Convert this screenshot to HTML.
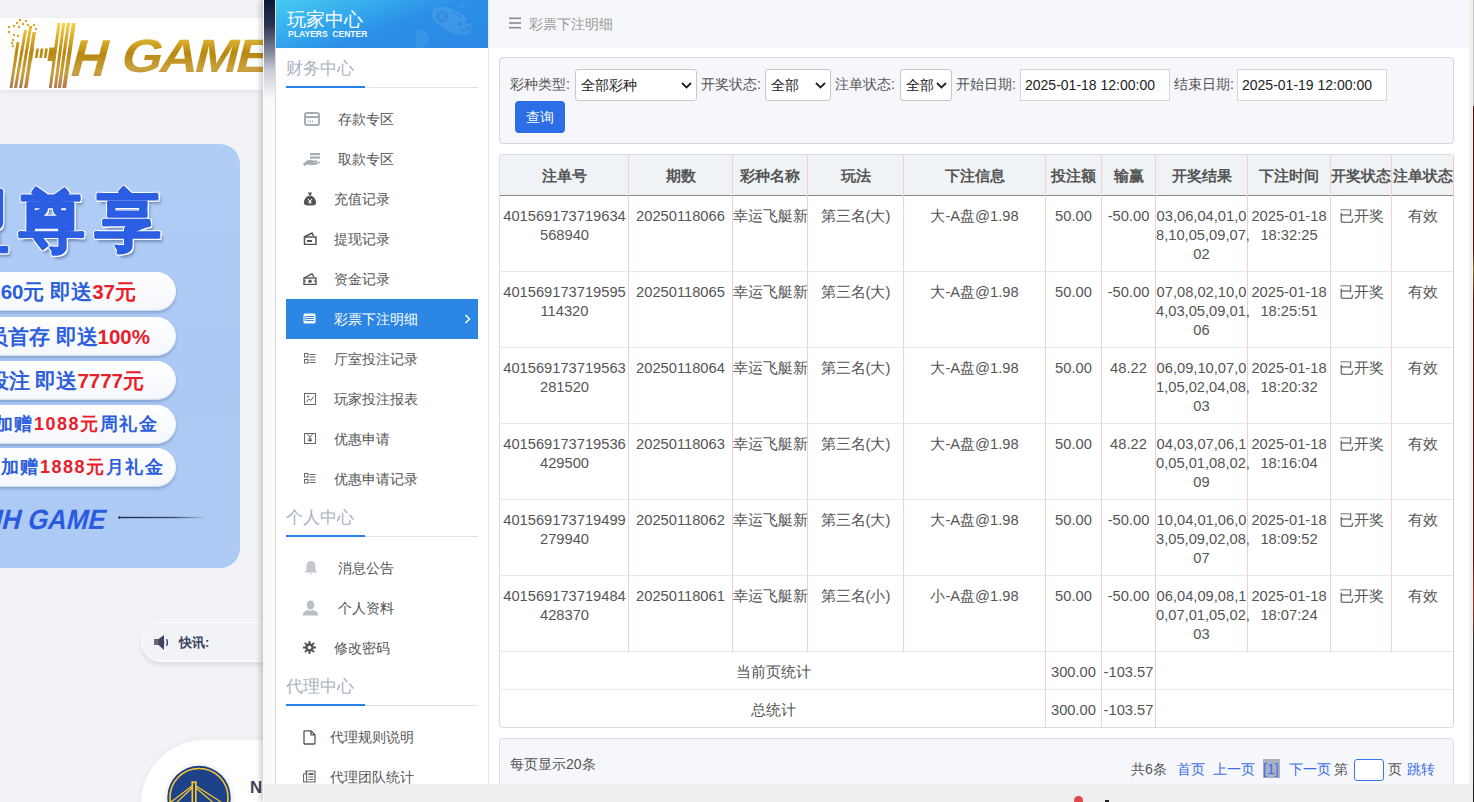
<!DOCTYPE html>
<html><head><meta charset="utf-8">
<style>
*{box-sizing:border-box;margin:0;padding:0}
html,body{width:1474px;height:802px;overflow:hidden}
body{position:relative;background:#f2f3f7;font-family:"Liberation Sans",sans-serif;color:#555}
.abs{position:absolute}
/* ---------- background page ---------- */
#logobar{left:0;top:18px;width:263px;height:72px;background:#fff;box-shadow:0 2px 6px rgba(0,0,0,.06)}
#banner{left:-30px;top:144px;width:270px;height:424px;border-radius:0 20px 20px 0;background:linear-gradient(180deg,#b0cdf6 0%,#abc9f4 50%,#aecbf5 100%)}
.pill{position:absolute;left:-60px;width:236px;height:39px;border-radius:20px;background:linear-gradient(180deg,#fff 0%,#f4f7fc 100%);box-shadow:0 2px 3px rgba(60,90,150,.35),inset 0 -1px 1px rgba(160,180,210,.4);font-weight:bold;font-size:20.5px;color:#2d5fdc;line-height:39px;white-space:nowrap;text-align:right;padding-right:40px}
.pill b{color:#e8202a}
#news{left:141px;top:622px;width:260px;height:40px;border-radius:20px;border:1px solid #fff;background:#f2f3f7;box-shadow:0 3px 5px rgba(0,0,0,.10)}
#card{left:141px;top:740px;width:300px;height:200px;border-radius:64px;background:#fff;box-shadow:0 0 8px rgba(0,0,0,.05)}
/* ---------- modal ---------- */
#modal{left:263px;top:0;width:1211px;height:802px;background:#fafafa;box-shadow:-3px 0 5px rgba(0,0,0,.18)}
#mstrip{left:1px;top:0;width:12px;height:100px;background:linear-gradient(180deg,#0d1a33 0%,#2a3550 25%,#7a8194 50%,#c9ccd6 70%,#fafafa 100%)}
#side{left:12px;top:0;width:214px;height:802px;background:#fff;border-left:1px solid #dcdcdc;border-right:1px solid #e4e7ed}
#content{left:226px;top:0;width:980px;height:802px;background:#fff}
#rstrip{left:1206px;top:0;width:5px;height:802px;background:#f2f2f2}
#bottombar{left:1px;top:784px;width:1210px;height:18px;background:#efefef}

/* sidebar */
#shead{left:0;top:0;width:212px;height:48px;background:linear-gradient(160deg,#45cbf2 0%,#33a6ec 35%,#2b8fe6 55%,#2a88e5 100%);overflow:hidden}
#shead .t1{position:absolute;left:11px;top:9px;font-size:19px;color:#fff;line-height:22px;white-space:nowrap}
#shead .t2{position:absolute;left:12px;top:29px;font-size:8.6px;font-weight:bold;color:#fff;line-height:10px;letter-spacing:0;white-space:nowrap;word-spacing:2px;opacity:.95}
.sec{position:absolute;left:10px;width:192px;height:30px}
.sec .tt{position:absolute;left:0;top:-4px;font-size:17px;color:#a9b2bf;line-height:30px;white-space:nowrap}
.sec .ln{position:absolute;left:0;bottom:0;width:192px;height:1px;background:#dfe3e8}
.sec .bl{position:absolute;left:0;bottom:0;width:79px;height:2px;background:#2680eb}
.mi{position:absolute;left:10px;width:192px;height:40px;font-size:14px;color:#555;line-height:40px;white-space:nowrap}
.mi .tx{position:absolute;top:0}
.mi svg{position:absolute}
.mi.act{background:#2b86e4;color:#fff}

/* content */
#chead{left:0;top:0;width:979px;height:48px;background:#f5f7fa}
#chead .tt{position:absolute;left:40px;top:0;line-height:48px;font-size:14px;color:#999;white-space:nowrap}
#filter{left:10px;top:57px;width:955px;height:87px;border:1px solid #d3d7de;border-radius:4px;background:#f5f7fa}
.lb{position:absolute;font-size:14px;color:#555;line-height:20px;white-space:nowrap;top:16px}
.sel{position:absolute;top:11px;height:32px;background:#fff;border:1px solid #c8c8c8;border-radius:3px;font-size:14px;color:#222;line-height:30px;padding-left:5px;white-space:nowrap}
.sel svg{position:absolute;right:4px;top:12px}
.inp{position:absolute;top:11px;height:32px;background:#fff;border:1px solid #d4d4d4;font-size:14px;color:#222;line-height:30px;padding-left:4px;white-space:nowrap}
#qbtn{left:15px;top:43px;width:50px;height:32px;border-radius:4px;background:#2c6ee6;color:#fff;font-size:14px;line-height:32px;text-align:center}

#tbl{left:10px;top:154px;width:955px;height:574px;border:1px solid #d9dde3;border-right-color:#ecc9c9;border-radius:4px;background:#fff;overflow:hidden}
#tbl .hd{position:absolute;left:0;top:0;width:953px;height:40px;background:#eff3f6}
#tbl .hl{position:absolute;left:0;width:953px;height:1px;background:#e8e8e8}
#tbl .vl{position:absolute;width:1px;background:#f4cfcf}
#tbl .c{position:absolute;text-align:center;font-size:14.7px;line-height:19px;color:#555;white-space:nowrap}
#tbl .h{position:absolute;top:0;height:40px;line-height:41px;text-align:center;font-size:15px;font-weight:bold;color:#555;white-space:nowrap}
#pager{left:10px;top:738px;width:955px;height:70px;border:1px solid #d9dde3;border-radius:4px;background:#f5f7fa}

.pg{position:absolute;top:20px;font-size:14px;line-height:20px;color:#555;white-space:nowrap}
.pg.bl{color:#3d6ee6}

.zx{font-size:66px;font-weight:900;color:#2b5ee2;line-height:80px;white-space:nowrap;letter-spacing:10px;text-shadow:.7px 0 0 #2b5ee2,-.7px 0 0 #2b5ee2,0 .7px 0 #2b5ee2,0 -.7px 0 #2b5ee2,2px 0 0 #fff,-2px 0 0 #fff,0 2px 0 #fff,0 -2px 0 #fff,1.5px 1.5px 0 #fff,-1.5px -1.5px 0 #fff,1.5px -1.5px 0 #fff,-1.5px 1.5px 0 #fff,3px 4px 3px rgba(60,80,130,.55)}
</style></head>
<body>
<!-- background page -->
<div id="logobar" class="abs">
  <svg class="abs" style="left:0;top:0" width="263" height="72" viewBox="0 18 263 72">
    <defs>
      <linearGradient id="gold" x1="0" y1="0" x2="0" y2="1">
        <stop offset="0" stop-color="#f9d24a"/><stop offset=".45" stop-color="#b8870f"/><stop offset=".75" stop-color="#c9a23e"/><stop offset="1" stop-color="#b07a50"/>
      </linearGradient>
      <linearGradient id="gold2" x1="0" y1="23" x2="0" y2="88" gradientUnits="userSpaceOnUse">
        <stop offset="0" stop-color="#f9d24a"/><stop offset=".45" stop-color="#b8870f"/><stop offset=".75" stop-color="#c9a23e"/><stop offset="1" stop-color="#b07a50"/>
      </linearGradient>
    </defs>
    <g fill="url(#gold2)">
      <polygon points="9.5,88 12.5,88 19.5,42 16.5,42"/>
      <polygon points="14,88 17,88 27,30 24,30"/>
      <polygon points="19,88 22,88 32,27 29,27"/>
      <polygon points="24,88 27.5,88 36,32 32.5,32"/>
      <polygon points="48.8,88 51.8,88 60.6,23 57.6,23"/>
      <polygon points="53.8,88 56.8,88 65.2,23 62.2,23"/>
      <polygon points="57.8,88 61,88 70,23 66.8,23"/>
      <polygon points="62.3,88 66.2,88 75.8,23 71.8,23"/>
      <polygon points="30.5,47.6 34,47.6 32,61 28.5,61"/><polygon points="36.3,48.5 39,48.5 37.6,58 34.9,58"/><polygon points="40.7,48.5 43.4,48.5 42,58 39.3,58"/><polygon points="45.2,48.5 47.9,48.5 46.5,58 43.8,58"/><polygon points="49.5,47.6 56,47.6 54,61 47.5,61"/>
      <g fill="#d8a520"><circle cx="20" cy="20" r="1.3"/><circle cx="17" cy="23" r="1.2"/><circle cx="14" cy="26" r="1.2"/><circle cx="23" cy="24" r="1.2"/><circle cx="26" cy="21" r="1.2"/><circle cx="9" cy="27" r="1.2"/><circle cx="19" cy="27" r="1.2"/><circle cx="34" cy="25" r="1.2"/><circle cx="36" cy="29" r="1.2"/><circle cx="9" cy="32" r="1.2"/><circle cx="14" cy="35" r="1.2"/><circle cx="18" cy="36" r="1.2"/><circle cx="13" cy="40" r="1.2"/><circle cx="12" cy="43" r="1.2"/><circle cx="13" cy="46" r="1.2"/><circle cx="31" cy="27" r="1.2"/><circle cx="28" cy="25" r="1.2"/></g>
    </g>
    <g fill="url(#gold)">
      <text x="0" y="0" transform="translate(68,75.6) skewX(-15)" font-family="Liberation Sans" font-weight="bold" font-size="52" textLength="36" lengthAdjust="spacingAndGlyphs">H</text>
      <text x="0" y="0" transform="translate(119,72) skewX(-14) scale(1.12,1)" font-family="Liberation Sans" font-weight="bold" font-size="47" letter-spacing="-2.5">GAME</text>
    </g>
  </svg>
</div>
<div id="banner" class="abs">
  <div class="abs" style="left:30px;top:0;width:240px;height:424px;overflow:hidden">
    <div class="abs zx" style="left:-57px;top:37px">盟尊享</div>
    <div class="pill" style="top:128px"><span>首存260元 即送</span><b>37元</b></div>
    <div class="pill" style="top:173px;padding-right:26px"><span>会员首存 即送</span><b>100%</b></div>
    <div class="pill" style="top:217px;padding-right:32px"><span>每日投注 即送</span><b>7777元</b></div>
    <div class="pill" style="top:261px;padding-right:18px;letter-spacing:1.5px;font-size:18px"><span>每天加赠</span><b>1088元</b><span>周礼金</span></div>
    <div class="pill" style="top:304px;padding-right:12px;letter-spacing:1.5px;font-size:18px"><span>每天加赠</span><b>1888元</b><span>月礼金</span></div>
    <svg class="abs" style="left:0;top:360px" width="220" height="30" viewBox="0 0 220 30">
      <text x="0" y="0" transform="translate(-18,24.5) skewX(-14)" font-family="Liberation Sans" font-weight="bold" font-size="28" fill="#2a5ae0" textLength="122" lengthAdjust="spacingAndGlyphs">HH GAME</text>
      <defs><linearGradient id="ln" x1="0" x2="1"><stop offset="0" stop-color="#1d2a44"/><stop offset=".6" stop-color="#3a4a66"/><stop offset="1" stop-color="#3a4a66" stop-opacity="0"/></linearGradient></defs>
      <circle cx="119.5" cy="13.5" r="1.3" fill="#1d2a44"/>
      <rect x="121" y="12.8" width="86" height="1.4" fill="url(#ln)"/>
    </svg>
  </div>
</div>
<div id="news" class="abs">
  <svg class="abs" style="left:12px;top:12px" width="17" height="15" viewBox="0 0 17 15"><rect x="0" y="4" width="5" height="6" fill="#6a6878"/><path d="M4.5 4 L10 0 L10 15 L4.5 10Z" fill="#3d4560"/><path d="M12.5 4 Q14.5 7.5 12.5 11" stroke="#3d4560" stroke-width="1.2" fill="none"/><path d="M10 5 Q12 7.5 10 10" fill="#c9a0a0" opacity=".7"/></svg>
  <div class="abs" style="left:37px;top:10px;font-size:13px;font-weight:bold;color:#3a4060;line-height:20px;white-space:nowrap">快讯:</div>
</div>
<div id="card" class="abs">
  <svg class="abs" style="left:22px;top:18px" width="80" height="80" viewBox="0 0 80 80">
    <circle cx="36" cy="39.5" r="35" fill="#f6f6f6"/>
    <circle cx="36" cy="39.5" r="31.7" fill="#1d428a"/>
    <circle cx="36" cy="39.5" r="29" fill="none" stroke="#ffc72c" stroke-width="1.6"/>
    <g fill="#ffc72c"><rect x="28.5" y="23.5" width="1.6" height="22"/><rect x="32" y="23.5" width="1.6" height="22"/><rect x="28.5" y="23.5" width="5" height="1.6"/></g>
    <path d="M29 28 L8 44 M29 30 L12 46 M33 28 L58 44 M33 30 L52 46" stroke="#ffc72c" stroke-width="1.2"/>
  </svg>
  <div class="abs" style="left:109px;top:38px;font-size:17px;font-weight:bold;color:#45435a;line-height:20px">N</div>
</div>

<div id="modal" class="abs">
  <div id="mstrip" class="abs"></div>
  <div id="side" class="abs">
    <div id="shead" class="abs">
      <svg class="abs" style="left:140px;top:0" width="72" height="48" viewBox="0 0 72 48">
        <g transform="rotate(28 36 21)"><ellipse cx="36" cy="21" rx="22" ry="11" fill="#fff" opacity=".09"/></g>
        <circle cx="26" cy="16.5" r="6" fill="#0a50c8" opacity=".18"/>
        <path d="M23 13.5 L29 19.5 M29 13.5 L23 19.5" stroke="#fff" stroke-width="1.3" opacity=".12"/>
        <g fill="#0a50c8" opacity=".18"><circle cx="44" cy="23.8" r="2.2"/><circle cx="51.5" cy="21.9" r="2.2"/><circle cx="46.5" cy="30.6" r="2.2"/><circle cx="53" cy="28.7" r="2.2"/><rect x="35.5" y="12" width="4" height="1.6" transform="rotate(30 37.5 13)"/><rect x="40.5" y="15.5" width="4" height="1.6" transform="rotate(30 42.5 16.5)"/></g>
        <path d="M41 8 L45 5.5 L49 8.5 L45 1" stroke="#fff" stroke-width="1" fill="none" opacity=".1"/>
        <circle cx="4" cy="39" r="9" fill="#fff" opacity=".07"/>
      </svg>
      <div class="t1">玩家中心</div>
      <div class="t2">PLAYERS CENTER</div>
    </div>
    <div class="sec" style="top:58px"><div class="tt">财务中心</div><div class="ln"></div><div class="bl"></div></div>
    <div class="mi" style="top:99px">
      <svg style="left:18px;top:13px" width="16" height="14" viewBox="0 0 16 14"><rect x="1" y="1" width="14" height="12" rx="2" fill="none" stroke="#a4abb3" stroke-width="2"/><rect x="1" y="4" width="14" height="2" fill="#a4abb3"/><rect x="4" y="8.5" width="1" height="2" fill="#a4abb3"/><rect x="6" y="8.5" width="1" height="2" fill="#a4abb3"/><rect x="8" y="8.5" width="1" height="2" fill="#a4abb3"/></svg>
      <span class="tx" style="left:52px">存款专区</span></div>
    <div class="mi" style="top:139px">
      <svg style="left:16px;top:14px" width="19" height="13" viewBox="0 0 19 13"><rect x="8" y="0" width="10" height="2.2" fill="#a4abb3"/><rect x="8" y="3.5" width="10" height="2.2" fill="#a4abb3"/><path d="M1 11 L5 7.5 C7 6.5 10 7 12 7.5 L15 7.5 C16 7.5 16 9 15 9 L10 9.5 L16 9.5 L18 8 L18 9.5 C16 11.5 13 12 10 12 L5 11.5 L2.5 13Z" fill="#a4abb3"/></svg>
      <span class="tx" style="left:52px">取款专区</span></div>
    <div class="mi" style="top:179px">
      <svg style="left:17px;top:13px" width="14" height="14" viewBox="0 0 14 14"><path d="M5 0.5 L9 0.5 L8 3 L6 3Z M6 3.5 L8 3.5 C12 5 13.5 9 13 11.5 C12.5 13.5 10 13.5 7 13.5 C4 13.5 1.5 13.5 1 11.5 C0.5 9 2 5 6 3.5Z" fill="#555"/><path d="M5 7 L7 9 L9 7 M7 9 L7 12 M5.2 10 L8.8 10" stroke="#fff" stroke-width="1" fill="none"/></svg>
      <span class="tx" style="left:48px">充值记录</span></div>
    <div class="mi" style="top:219px">
      <svg style="left:17px;top:13px" width="14" height="13" viewBox="0 0 14 13"><path d="M1 5 L9 1 L10.5 4" stroke="#555" stroke-width="1.5" fill="none"/><rect x="1.5" y="5" width="11.5" height="7.5" fill="none" stroke="#555" stroke-width="1.5"/><rect x="4" y="8" width="5" height="2" fill="#555"/></svg>
      <span class="tx" style="left:48px">提现记录</span></div>
    <div class="mi" style="top:259px">
      <svg style="left:17px;top:14px" width="14" height="12" viewBox="0 0 14 12"><path d="M1 5 L9 0.8 L11 4" stroke="#555" stroke-width="1.4" fill="none"/><rect x="1" y="5" width="12" height="6.5" fill="none" stroke="#555" stroke-width="1.4"/><circle cx="7" cy="8.2" r="1.8" fill="#555"/><rect x="1" y="7.5" width="2" height="1.2" fill="#555"/><rect x="11" y="7.5" width="2" height="1.2" fill="#555"/></svg>
      <span class="tx" style="left:48px">资金记录</span></div>
    <div class="mi act" style="top:299px">
      <svg style="left:17px;top:14px" width="13" height="11" viewBox="0 0 13 11"><rect x="0.5" y="0.5" width="12" height="10" rx="1.5" fill="#fff"/><rect x="3" y="3" width="8" height="1" fill="#2b86e4"/><rect x="3" y="5" width="8" height="1" fill="#2b86e4"/><rect x="3" y="7" width="8" height="1" fill="#2b86e4"/><rect x="1.5" y="3" width="1" height="5" fill="#2b86e4"/></svg>
      <span class="tx" style="left:48px">彩票下注明细</span>
      <svg style="left:178px;top:15px" width="7" height="10" viewBox="0 0 7 10"><path d="M1.5 1 L5.5 5 L1.5 9" stroke="#fff" stroke-width="1.5" fill="none"/></svg></div>
    <div class="mi" style="top:339px">
      <svg style="left:18px;top:14px" width="12" height="11" viewBox="0 0 12 11"><rect x="0.5" y="0.5" width="3.5" height="3.5" fill="none" stroke="#666" stroke-width="1"/><rect x="0.5" y="6.5" width="3.5" height="3.5" fill="none" stroke="#666" stroke-width="1"/><rect x="5.5" y="1" width="6" height="1" fill="#666"/><rect x="5.5" y="3.5" width="6" height="1" fill="#666"/><rect x="5.5" y="6.5" width="6" height="1" fill="#666"/><rect x="5.5" y="9" width="6" height="1" fill="#666"/></svg>
      <span class="tx" style="left:48px">厅室投注记录</span></div>
    <div class="mi" style="top:379px">
      <svg style="left:18px;top:14px" width="12" height="12" viewBox="0 0 12 12"><rect x="0.5" y="0.5" width="11" height="11" fill="none" stroke="#666" stroke-width="1"/><path d="M2.5 9 L5 6 L7 7.5 L9.5 3.5" stroke="#666" stroke-width="1" fill="none"/><circle cx="4" cy="3.5" r="1" fill="#666"/></svg>
      <span class="tx" style="left:48px">玩家投注报表</span></div>
    <div class="mi" style="top:419px">
      <svg style="left:18px;top:14px" width="12" height="11" viewBox="0 0 12 11"><rect x="0.5" y="0.5" width="11" height="10" fill="none" stroke="#666" stroke-width="1"/><path d="M3 0.5 L6 4 L9 0.5 M6 4 L6 9 M4 6 L8 6 M4 7.5 L8 7.5" stroke="#666" stroke-width="1" fill="none"/></svg>
      <span class="tx" style="left:48px">优惠申请</span></div>
    <div class="mi" style="top:459px">
      <svg style="left:18px;top:14px" width="12" height="11" viewBox="0 0 12 11"><rect x="0.5" y="0.5" width="3.5" height="3.5" fill="none" stroke="#666" stroke-width="1"/><rect x="0.5" y="6.5" width="3.5" height="3.5" fill="none" stroke="#666" stroke-width="1"/><rect x="5.5" y="1" width="6" height="1" fill="#666"/><rect x="5.5" y="3.5" width="6" height="1" fill="#666"/><rect x="5.5" y="6.5" width="6" height="1" fill="#666"/><rect x="5.5" y="9" width="6" height="1" fill="#666"/></svg>
      <span class="tx" style="left:48px">优惠申请记录</span></div>

    <div class="sec" style="top:507px"><div class="tt">个人中心</div><div class="ln"></div><div class="bl"></div></div>
    <div class="mi" style="top:548px">
      <svg style="left:17px;top:12px" width="16" height="16" viewBox="0 0 16 16"><path d="M8 1 C11 1 12.5 3.5 12.5 6.5 L12.5 10 L14.5 12.5 L1.5 12.5 L3.5 10 L3.5 6.5 C3.5 3.5 5 1 8 1Z" fill="#c3c8ce"/><path d="M6.5 13.5 L9.5 13.5 L8 15Z" fill="#c3c8ce"/></svg>
      <span class="tx" style="left:52px">消息公告</span></div>
    <div class="mi" style="top:588px">
      <svg style="left:16px;top:12px" width="17" height="16" viewBox="0 0 17 16"><ellipse cx="8.5" cy="5" rx="3.8" ry="4.5" fill="#b9bfc6"/><path d="M0.5 15.5 C1 11.5 4 10.5 6.5 10 L8.5 11 L10.5 10 C13 10.5 16 11.5 16.5 15.5Z" fill="#b9bfc6"/></svg>
      <span class="tx" style="left:52px">个人资料</span></div>
    <div class="mi" style="top:628px">
      <svg style="left:17px;top:13px" width="13" height="13" viewBox="0 0 13 13"><g fill="#555"><circle cx="6.5" cy="6.5" r="4.2"/><rect x="5.5" y="0" width="2" height="13"/><rect x="0" y="5.5" width="13" height="2"/><rect x="5.5" y="0" width="2" height="13" transform="rotate(45 6.5 6.5)"/><rect x="5.5" y="0" width="2" height="13" transform="rotate(-45 6.5 6.5)"/></g><circle cx="6.5" cy="6.5" r="1.8" fill="#fff"/></svg>
      <span class="tx" style="left:48px">修改密码</span></div>

    <div class="sec" style="top:676px"><div class="tt">代理中心</div><div class="ln"></div><div class="bl"></div></div>
    <div class="mi" style="top:717px">
      <svg style="left:17px;top:13px" width="13" height="15" viewBox="0 0 13 15"><path d="M1 1.5 Q1 0.8 1.7 0.8 L8 0.8 L12 4.8 L12 13.3 Q12 14 11.3 14 L1.7 14 Q1 14 1 13.3Z M8 0.8 L8 4.8 L12 4.8" fill="none" stroke="#555" stroke-width="1.3"/></svg>
      <span class="tx" style="left:44px">代理规则说明</span></div>
    <div class="mi" style="top:757px">
      <svg style="left:17px;top:13px" width="13" height="13" viewBox="0 0 13 13"><path d="M3 1 L12 1 L12 12 L1.5 12 Q0.5 12 0.5 11 L0.5 4 L3 4Z" fill="none" stroke="#666" stroke-width="1.2"/><rect x="3" y="1" width="1.2" height="11" fill="#666"/><rect x="5.5" y="3" width="5" height="2" fill="#666"/><rect x="5.5" y="6.5" width="5" height="1" fill="#666"/><rect x="5.5" y="9" width="5" height="1" fill="#666"/></svg>
      <span class="tx" style="left:44px">代理团队统计</span></div>
  </div>
  <div id="content" class="abs">
    <div id="chead" class="abs">
      <svg class="abs" style="left:20px;top:17px" width="12" height="12" viewBox="0 0 12 12"><rect x="0" y="0.5" width="12" height="1.6" fill="#8c8c8c"/><rect x="0" y="5.2" width="12" height="1.6" fill="#8c8c8c"/><rect x="0" y="9.9" width="12" height="1.6" fill="#8c8c8c"/></svg>
      <div class="tt">彩票下注明细</div>
    </div>
    <div id="filter" class="abs">
      <div class="lb" style="left:10px">彩种类型:</div>
      <div class="sel" style="left:75px;width:122px">全部彩种<svg width="11" height="7" viewBox="0 0 11 7"><path d="M1 1 L5.5 5.5 L10 1" stroke="#222" stroke-width="1.8" fill="none"/></svg></div>
      <div class="lb" style="left:201px">开奖状态:</div>
      <div class="sel" style="left:265px;width:66px">全部<svg width="11" height="7" viewBox="0 0 11 7"><path d="M1 1 L5.5 5.5 L10 1" stroke="#222" stroke-width="1.8" fill="none"/></svg></div>
      <div class="lb" style="left:335px">注单状态:</div>
      <div class="sel" style="left:400px;width:52px">全部<svg width="11" height="7" viewBox="0 0 11 7"><path d="M1 1 L5.5 5.5 L10 1" stroke="#222" stroke-width="1.8" fill="none"/></svg></div>
      <div class="lb" style="left:456px">开始日期:</div>
      <div class="inp" style="left:520px;width:150px">2025-01-18 12:00:00</div>
      <div class="lb" style="left:674px">结束日期:</div>
      <div class="inp" style="left:737px;width:150px">2025-01-19 12:00:00</div>
      <div id="qbtn" class="abs">查询</div>
    </div>
    <div id="tbl" class="abs">
<div class="hd"></div>
<div class="h" style="left:0px;width:129px">注单号</div>
<div class="h" style="left:129px;width:103px">期数</div>
<div class="h" style="left:233px;width:74px">彩种名称</div>
<div class="h" style="left:308px;width:95px">玩法</div>
<div class="h" style="left:404px;width:141px">下注信息</div>
<div class="h" style="left:546px;width:55px">投注额</div>
<div class="h" style="left:602px;width:53px">输赢</div>
<div class="h" style="left:656px;width:91px">开奖结果</div>
<div class="h" style="left:748px;width:82px">下注时间</div>
<div class="h" style="left:831px;width:60px">开奖状态</div>
<div class="h" style="left:892px;width:61px">注单状态</div>
<div class="hl" style="top:40px;background:#8f8787"></div>
<div class="hl" style="top:116px"></div>
<div class="hl" style="top:192px"></div>
<div class="hl" style="top:268px"></div>
<div class="hl" style="top:344px"></div>
<div class="hl" style="top:420px"></div>
<div class="hl" style="top:496px"></div>
<div class="hl" style="top:534px"></div>
<div class="vl" style="left:128px;top:0;height:497px"></div>
<div class="vl" style="left:232px;top:0;height:497px"></div>
<div class="vl" style="left:307px;top:0;height:497px"></div>
<div class="vl" style="left:403px;top:0;height:497px"></div>
<div class="vl" style="left:545px;top:0;height:572px"></div>
<div class="vl" style="left:601px;top:0;height:572px"></div>
<div class="vl" style="left:655px;top:0;height:572px"></div>
<div class="vl" style="left:747px;top:0;height:497px"></div>
<div class="vl" style="left:830px;top:0;height:497px"></div>
<div class="vl" style="left:891px;top:0;height:497px"></div>
<div class="c" style="left:0px;width:129px;top:52px">401569173719634<br>568940</div>
<div class="c" style="left:129px;width:103px;top:52px">20250118066</div>
<div class="c" style="left:233px;width:74px;top:52px">幸运飞艇新</div>
<div class="c" style="left:308px;width:95px;top:52px">第三名(大)</div>
<div class="c" style="left:404px;width:141px;top:52px">大-A盘@1.98</div>
<div class="c" style="left:546px;width:55px;top:52px">50.00</div>
<div class="c" style="left:602px;width:53px;top:52px">-50.00</div>
<div class="c" style="left:656px;width:91px;top:52px">03,06,04,01,0<br>8,10,05,09,07,<br>02</div>
<div class="c" style="left:748px;width:82px;top:52px">2025-01-18<br>18:32:25</div>
<div class="c" style="left:831px;width:60px;top:52px">已开奖</div>
<div class="c" style="left:892px;width:61px;top:52px">有效</div>
<div class="c" style="left:0px;width:129px;top:128px">401569173719595<br>114320</div>
<div class="c" style="left:129px;width:103px;top:128px">20250118065</div>
<div class="c" style="left:233px;width:74px;top:128px">幸运飞艇新</div>
<div class="c" style="left:308px;width:95px;top:128px">第三名(大)</div>
<div class="c" style="left:404px;width:141px;top:128px">大-A盘@1.98</div>
<div class="c" style="left:546px;width:55px;top:128px">50.00</div>
<div class="c" style="left:602px;width:53px;top:128px">-50.00</div>
<div class="c" style="left:656px;width:91px;top:128px">07,08,02,10,0<br>4,03,05,09,01,<br>06</div>
<div class="c" style="left:748px;width:82px;top:128px">2025-01-18<br>18:25:51</div>
<div class="c" style="left:831px;width:60px;top:128px">已开奖</div>
<div class="c" style="left:892px;width:61px;top:128px">有效</div>
<div class="c" style="left:0px;width:129px;top:204px">401569173719563<br>281520</div>
<div class="c" style="left:129px;width:103px;top:204px">20250118064</div>
<div class="c" style="left:233px;width:74px;top:204px">幸运飞艇新</div>
<div class="c" style="left:308px;width:95px;top:204px">第三名(大)</div>
<div class="c" style="left:404px;width:141px;top:204px">大-A盘@1.98</div>
<div class="c" style="left:546px;width:55px;top:204px">50.00</div>
<div class="c" style="left:602px;width:53px;top:204px">48.22</div>
<div class="c" style="left:656px;width:91px;top:204px">06,09,10,07,0<br>1,05,02,04,08,<br>03</div>
<div class="c" style="left:748px;width:82px;top:204px">2025-01-18<br>18:20:32</div>
<div class="c" style="left:831px;width:60px;top:204px">已开奖</div>
<div class="c" style="left:892px;width:61px;top:204px">有效</div>
<div class="c" style="left:0px;width:129px;top:280px">401569173719536<br>429500</div>
<div class="c" style="left:129px;width:103px;top:280px">20250118063</div>
<div class="c" style="left:233px;width:74px;top:280px">幸运飞艇新</div>
<div class="c" style="left:308px;width:95px;top:280px">第三名(大)</div>
<div class="c" style="left:404px;width:141px;top:280px">大-A盘@1.98</div>
<div class="c" style="left:546px;width:55px;top:280px">50.00</div>
<div class="c" style="left:602px;width:53px;top:280px">48.22</div>
<div class="c" style="left:656px;width:91px;top:280px">04,03,07,06,1<br>0,05,01,08,02,<br>09</div>
<div class="c" style="left:748px;width:82px;top:280px">2025-01-18<br>18:16:04</div>
<div class="c" style="left:831px;width:60px;top:280px">已开奖</div>
<div class="c" style="left:892px;width:61px;top:280px">有效</div>
<div class="c" style="left:0px;width:129px;top:356px">401569173719499<br>279940</div>
<div class="c" style="left:129px;width:103px;top:356px">20250118062</div>
<div class="c" style="left:233px;width:74px;top:356px">幸运飞艇新</div>
<div class="c" style="left:308px;width:95px;top:356px">第三名(大)</div>
<div class="c" style="left:404px;width:141px;top:356px">大-A盘@1.98</div>
<div class="c" style="left:546px;width:55px;top:356px">50.00</div>
<div class="c" style="left:602px;width:53px;top:356px">-50.00</div>
<div class="c" style="left:656px;width:91px;top:356px">10,04,01,06,0<br>3,05,09,02,08,<br>07</div>
<div class="c" style="left:748px;width:82px;top:356px">2025-01-18<br>18:09:52</div>
<div class="c" style="left:831px;width:60px;top:356px">已开奖</div>
<div class="c" style="left:892px;width:61px;top:356px">有效</div>
<div class="c" style="left:0px;width:129px;top:432px">401569173719484<br>428370</div>
<div class="c" style="left:129px;width:103px;top:432px">20250118061</div>
<div class="c" style="left:233px;width:74px;top:432px">幸运飞艇新</div>
<div class="c" style="left:308px;width:95px;top:432px">第三名(小)</div>
<div class="c" style="left:404px;width:141px;top:432px">小-A盘@1.98</div>
<div class="c" style="left:546px;width:55px;top:432px">50.00</div>
<div class="c" style="left:602px;width:53px;top:432px">-50.00</div>
<div class="c" style="left:656px;width:91px;top:432px">06,04,09,08,1<br>0,07,01,05,02,<br>03</div>
<div class="c" style="left:748px;width:82px;top:432px">2025-01-18<br>18:07:24</div>
<div class="c" style="left:831px;width:60px;top:432px">已开奖</div>
<div class="c" style="left:892px;width:61px;top:432px">有效</div>
<div class="c" style="left:0;width:546px;top:497px;line-height:40px">当前页统计</div>
<div class="c" style="left:546px;width:55px;top:497px;line-height:40px">300.00</div>
<div class="c" style="left:602px;width:53px;top:497px;line-height:40px">-103.57</div>
<div class="c" style="left:0;width:546px;top:535px;line-height:40px">总统计</div>
<div class="c" style="left:546px;width:55px;top:535px;line-height:40px">300.00</div>
<div class="c" style="left:602px;width:53px;top:535px;line-height:40px">-103.57</div>
</div>
<div id="pager" class="abs">
      <div class="lb" style="left:10px;top:15px">每页显示20条</div>
      <div class="pg" style="left:631px">共6条</div>
      <div class="pg bl" style="left:677px">首页</div>
      <div class="pg bl" style="left:713px">上一页</div>
      <div class="abs" style="left:763px;top:20px;width:17px;height:19px;background:#acafc0"></div>
      <div class="pg bl" style="left:763px;font-family:'Liberation Sans',sans-serif;letter-spacing:0">[1]</div>
      <div class="pg bl" style="left:789px">下一页</div>
      <div class="pg" style="left:834px">第</div>
      <div class="abs" style="left:854px;top:20px;width:30px;height:22px;background:#fff;border:1.5px solid #3a78f0;border-radius:3px"></div>
      <div class="pg" style="left:888px">页</div>
      <div class="pg bl" style="left:907px">跳转</div>
    </div>
  </div>
  <div id="rstrip" class="abs"></div>
  <div id="bottombar" class="abs"></div>
  <div class="abs" style="left:1210px;top:0;width:1px;height:802px;background:linear-gradient(180deg,#c4c4c4 0,#c4c4c4 106px,#5a0c0c 106px,#5a0c0c 250px,#8a6a20 270px,#5a0c0c 300px,#6a1010 560px,#c03020 600px,#303030 640px,#202020 802px)"></div>
  <div class="abs" style="left:811px;top:796px;width:9px;height:9px;border-radius:50%;background:#e04848"></div>
  <div class="abs" style="left:842px;top:800px;width:4px;height:4px;background:#222"></div>
</div>
</body></html>
